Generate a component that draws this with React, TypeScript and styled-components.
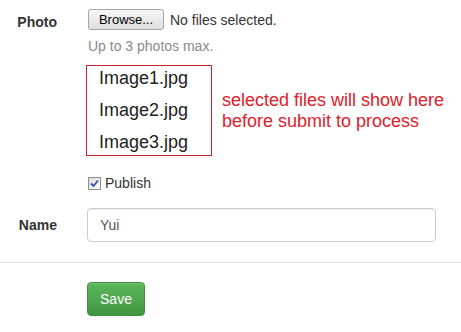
import React, { useState } from 'react'
import styled, { createGlobalStyle } from 'styled-components'

const GlobalStyle = createGlobalStyle`
  body {
    margin: 0;
    background: #fff;
    font-family: "Liberation Sans", Arial, sans-serif;
    font-size: 14px;
    color: #333;
  }
`

const App = () => {
  const [published, setPublished] = useState(true)
  const [name, setName] = useState('Yui')
  const files = ['Image1.jpg', 'Image2.jpg', 'Image3.jpg']

  return (
    <>
      <GlobalStyle />
      <Form>
        <Group $top={9}>
          <Label $pad={3}>Photo</Label>
          <Controls>
            <FileRow>
              <BrowseButton type="button">Browse...</BrowseButton>
              <FileStatus>No files selected.</FileStatus>
            </FileRow>
            <Help>Up to 3 photos max.</Help>
            <PreviewRow>
              <FileList>
                {files.map((f) => (
                  <FileItem key={f}>{f}</FileItem>
                ))}
              </FileList>
              <Note>
                selected files will show here
                <br />
                before submit to process
              </Note>
            </PreviewRow>
          </Controls>
        </Group>

        <Group $top={17}>
          <Label />
          <Controls>
            <CheckLabel onClick={() => setPublished(!published)}>
              <CheckBox>
                {published && (
                  <svg width="9" height="9" viewBox="0 0 9 9">
                    <path d="M1 4.5 L3.5 7 L8 1.5" fill="none" stroke="#2f54a8" strokeWidth="1.8" />
                  </svg>
                )}
              </CheckBox>
              Publish
            </CheckLabel>
          </Controls>
        </Group>

        <Group $top={15}>
          <Label $pad={7}>Name</Label>
          <Controls>
            <TextInput value={name} onChange={(e) => setName(e.target.value)} />
          </Controls>
        </Group>
      </Form>

      <Divider />

      <Footer>
        <Label />
        <Controls>
          <SaveButton type="button">Save</SaveButton>
        </Controls>
      </Footer>
    </>
  )
}

export default App

const Form = styled.div`
  padding-right: 25px;
`

const Group = styled.div<{ $top: number }>`
  display: flex;
  align-items: flex-start;
  margin-top: ${(p) => p.$top}px;
`

const Label = styled.div<{ $pad?: number }>`
  width: 57px;
  flex-shrink: 0;
  margin-right: 30px;
  padding-top: ${(p) => p.$pad || 0}px;
  text-align: right;
  font-weight: bold;
  line-height: 20px;
`

const Controls = styled.div`
  flex: 1;
  min-width: 0;
`

const FileRow = styled.div`
  display: flex;
  align-items: center;
`

const BrowseButton = styled.button`
  height: 21px;
  width: 76px;
  margin-left: 1px;
  padding: 0;
  font-family: "Liberation Sans", Arial, sans-serif;
  font-size: 13px;
  color: #000;
  border: 1px solid #a5a5a5;
  border-radius: 3px;
  background: linear-gradient(#f6f6f6, #dedede);
`

const FileStatus = styled.span`
  margin-left: 6px;
  line-height: 20px;
`

const Help = styled.div`
  margin-top: 6px;
  line-height: 20px;
  color: #8a8a8a;
  margin-left: 1px;
`

const PreviewRow = styled.div`
  display: flex;
  align-items: center;
  margin-top: 9px;
  margin-left: -1px;
`

const FileList = styled.div`
  flex-shrink: 0;
  width: 126px;
  display: flex;
  flex-direction: column;
  gap: 12px;
  padding: 2px 0 3px 12px;
  box-sizing: border-box;
  border: 1px solid #c8202f;
`

const FileItem = styled.div`
  font-size: 18px;
  line-height: 20px;
  color: #222;
`

const Note = styled.div`
  margin-left: 10px;
  white-space: nowrap;
  font-size: 18px;
  line-height: 21px;
  color: #e0202a;
`

const CheckLabel = styled.label`
  display: flex;
  align-items: center;
  line-height: 20px;
  margin-left: 1px;
  cursor: pointer;
`

const CheckBox = styled.span`
  width: 13px;
  height: 13px;
  box-sizing: border-box;
  margin-right: 4px;
  border: 1px solid #8e8f8f;
  background: linear-gradient(135deg, #dcdcdc, #fff);
  display: flex;
  align-items: center;
  justify-content: center;
`

const TextInput = styled.input`
  display: block;
  width: 100%;
  height: 34px;
  box-sizing: border-box;
  padding: 0 12px;
  font-family: "Liberation Sans", Arial, sans-serif;
  font-size: 14px;
  color: #555;
  border: 1px solid #ccc;
  border-radius: 4px;
  box-shadow: inset 0 1px 1px rgba(0, 0, 0, 0.075);
  outline: none;
`

const Divider = styled.div`
  height: 1px;
  margin-top: 20px;
  background: #e5e5e5;
`

const Footer = styled.div`
  display: flex;
  margin-top: 19px;
`

const SaveButton = styled.button`
  width: 58px;
  height: 34px;
  padding: 0;
  font-family: "Liberation Sans", Arial, sans-serif;
  font-size: 14px;
  color: #fff;
  border: 1px solid #3e8f3e;
  border-radius: 4px;
  background: linear-gradient(#5cb85c, #419641);
  box-shadow: inset 0 1px 0 rgba(255, 255, 255, 0.15), 0 1px 1px rgba(0, 0, 0, 0.075);
`
